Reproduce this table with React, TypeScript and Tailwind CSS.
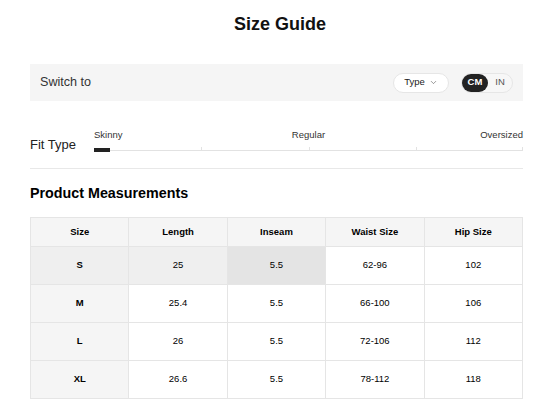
import { ChevronDown } from "lucide-react";

const headers = ["Size", "Length", "Inseam", "Waist Size", "Hip Size"];

const rows = [
  ["S", "25", "5.5", "62-96", "102"],
  ["M", "25.4", "5.5", "66-100", "106"],
  ["L", "26", "5.5", "72-106", "112"],
  ["XL", "26.6", "5.5", "78-112", "118"],
];

// the S row / Inseam column is shown in its hovered state
const cellBg = (r: number, c: number) => {
  if (r === 0 && c === 2) return "bg-[#e4e4e4]";
  if (r === 0 && c < 2) return "bg-[#efefef]";
  if (c === 0) return "bg-[#f5f5f5]";
  return "bg-white";
};

const App = () => {
  return (
    <div
      className="min-h-screen bg-white pl-[30px] pr-[23px] text-[#222]"
      style={{ fontFamily: '"Liberation Sans", Arial, sans-serif' }}
    >
      <h1 className="pt-[13px] pl-[7px] text-center text-[18px] font-bold leading-[22px] text-[#111]">
        Size Guide
      </h1>

      {/* Switch bar */}
      <div className="mt-[29px] flex h-[37px] items-center justify-between bg-[#f5f5f5] pl-[10px] pr-[10px]">
        <span className="text-[12.6px] text-[#333]">Switch to</span>
        <div className="flex items-center gap-[12px]">
          <button className="flex h-[20px] w-[56px] items-center justify-center gap-[4px] rounded-full border border-[#e6e6e6] bg-white text-[9.5px] text-[#222]">
            Type
            <ChevronDown size={9} strokeWidth={1.6} className="text-[#555]" />
          </button>
          <div className="flex h-[20px] w-[52px] items-center rounded-full border border-[#e6e6e6] bg-[#f7f7f7]">
            <span className="flex h-[18px] w-[26px] items-center justify-center rounded-full bg-[#222] text-[9.5px] font-bold text-white">
              CM
            </span>
            <span className="flex-1 text-center text-[9.5px] text-[#555]">IN</span>
          </div>
        </div>
      </div>

      {/* Fit type */}
      <div className="mt-[28px] flex items-end">
        <span className="w-[64px] text-[13px] leading-[16px] text-[#222]">Fit Type</span>
        <div className="flex-1 pb-[1px]">
          <div className="grid grid-cols-3 text-[9.5px] leading-[12px] text-[#333]">
            <span className="text-left">Skinny</span>
            <span className="text-center">Regular</span>
            <span className="text-right">Oversized</span>
          </div>
          <div className="relative mt-[7px] h-[4px]">
            <div className="absolute inset-x-0 top-[2px] h-px bg-[#e2e2e2]" />
            <div className="absolute left-1/4 top-[-1px] h-[4px] w-px bg-[#e2e2e2]" />
            <div className="absolute left-1/2 top-[-1px] h-[4px] w-px bg-[#e2e2e2]" />
            <div className="absolute left-3/4 top-[-1px] h-[4px] w-px bg-[#e2e2e2]" />
            <div className="absolute right-0 top-[-1px] h-[4px] w-px bg-[#e2e2e2]" />
            <div className="absolute left-0 top-0 h-[4px] w-[16px] bg-[#222]" />
          </div>
        </div>
      </div>

      <div className="mt-[15px] border-t border-[#e8e8e8]" />

      <h2 className="mt-[15px] text-[14.3px] font-bold leading-[18px] text-black">
        Product Measurements
      </h2>

      <table className="mt-[15px] w-full table-fixed border-collapse text-[9.5px]">
        <thead>
          <tr>
            {headers.map((h) => (
              <th
                key={h}
                className="h-[29px] border border-[#e5e5e5] bg-[#f5f5f5] text-center font-bold text-black"
              >
                {h}
              </th>
            ))}
          </tr>
        </thead>
        <tbody>
          {rows.map((row, r) => (
            <tr key={row[0]}>
              {row.map((cell, c) => (
                <td
                  key={c}
                  className={`h-[38px] border border-[#e5e5e5] text-center text-black ${cellBg(r, c)} ${
                    c === 0 ? "font-bold" : ""
                  }`}
                >
                  {cell}
                </td>
              ))}
            </tr>
          ))}
        </tbody>
      </table>
    </div>
  );
};

export default App;
